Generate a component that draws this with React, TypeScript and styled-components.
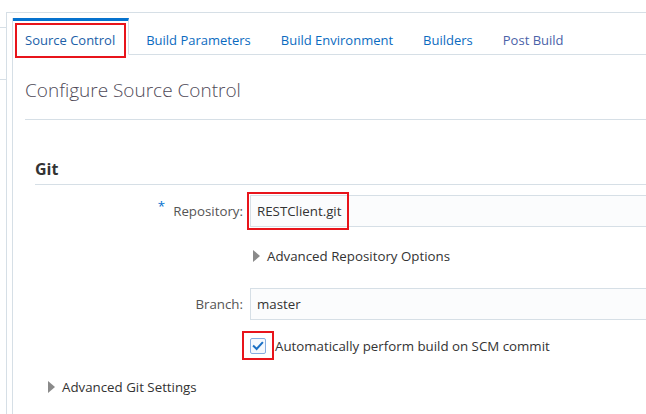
import React from "react";
import styled, { createGlobalStyle } from "styled-components";

const GlobalStyle = createGlobalStyle`
  html, body { margin: 0; padding: 0; background: #fff; }
  body {
    font-family: "Open Sans", "Noto Sans", "Liberation Sans", sans-serif;
    font-size: 13px;
    color: #333;
    overflow: hidden;
    width: 646px;
    height: 414px;
  }
`;

const BORDER = "#d6dfe6";

const Page = styled.div`
  display: flex;
  height: 414px;
  width: 646px;
  overflow: hidden;
`;

const LeftPane = styled.div`
  width: 6px;
  flex: none;
  padding-top: 27px;
  display: flex;
  flex-direction: column;
`;

const LeftRule = styled.div<{ $gap: number }>`
  height: 0;
  border-top: 1px solid ${BORDER};
  margin-bottom: ${(p) => p.$gap}px;
`;

const Frame = styled.div`
  flex: 1;
  margin-top: 12px;
  border-top: 1px solid ${BORDER};
  border-left: 1px solid ${BORDER};
  padding: 5px 0 0 5px;
  min-width: 0;
`;

const Panel = styled.div`
  border-left: 1px solid ${BORDER};
  height: 100%;
`;

const TabBar = styled.div`
  display: flex;
  height: 37px;
  position: relative;
`;

const Tab = styled.div<{ $active?: boolean; $lead?: number; $tint?: string }>`
  position: relative;
  display: flex;
  align-items: center;
  padding: ${(p) => (p.$active ? "5px 13px 0 12px" : `5px 15px 0 ${p.$lead ?? 15}px`)};
  color: ${(p) => p.$tint ?? (p.$active ? "#2060a8" : "#0b6bbf")};
  border-top: ${(p) => (p.$active ? "3px solid #0572ce" : "3px solid transparent")};
  border-right: ${(p) => (p.$active ? `1px solid ${BORDER}` : "none")};
  border-bottom: ${(p) => (p.$active ? "1px solid transparent" : `1px solid ${BORDER}`)};
  white-space: nowrap;
`;

const TabFill = styled.div`
  flex: 1;
  border-bottom: 1px solid ${BORDER};
`;

const Highlight = styled.span<{ $t: number; $l: number; $w: number; $h: number }>`
  position: absolute;
  top: ${(p) => p.$t}px;
  left: ${(p) => p.$l}px;
  width: ${(p) => p.$w}px;
  height: ${(p) => p.$h}px;
  border: 2px solid #e8141b;
  box-sizing: border-box;
  pointer-events: none;
`;

const Content = styled.div`
  padding: 0 0 0 12px;
  font-size: 13.3px;
`;

const Heading = styled.h1`
  margin: 0;
  padding: 22px 0 15px;
  font-size: 19px;
  font-weight: 300;
  line-height: 27px;
  color: #4f4a58;
  border-bottom: 1px solid ${BORDER};
  white-space: nowrap;
`;

const Section = styled.div`
  padding: 0 0 0 10px;
`;

const SectionTitle = styled.h2`
  margin: 0;
  padding: 39px 0 4px;
  font-size: 16px;
  font-weight: 700;
  line-height: 21px;
  color: #333;
  border-bottom: 1px solid ${BORDER};
`;

const Form = styled.div`
  display: grid;
  grid-template-columns: 208px 1fr;
  column-gap: 7px;
  padding-top: 10px;
`;

const Label = styled.label`
  display: flex;
  justify-content: flex-end;
  align-items: center;
  color: #555;
  white-space: nowrap;
`;

const Required = styled.span`
  color: #0572ce;
  margin-right: 8px;
  position: relative;
  top: -5px;
`;

const Field = styled.div`
  position: relative;
`;

const Input = styled.div`
  height: 30px;
  border: 1px solid ${BORDER};
  border-right: none;
  background: #fbfcfd;
  display: flex;
  align-items: center;
  padding-left: 6px;
  color: #333;
  white-space: nowrap;
`;

const Disclosure = styled.div<{ $mt: number }>`
  display: flex;
  align-items: center;
  gap: 7px;
  margin-top: ${(p) => p.$mt}px;
  color: #333;
  white-space: nowrap;
  height: 20px;
`;

const Triangle = styled.span`
  width: 0;
  height: 0;
  border-top: 6px solid transparent;
  border-bottom: 6px solid transparent;
  border-left: 7px solid #8a8a8a;
  margin-left: 3px;
`;

const RowGap = styled.div<{ $h: number }>`
  grid-column: 1 / -1;
  height: ${(p) => p.$h}px;
`;

const CheckRow = styled.div`
  grid-column: 2;
  display: flex;
  align-items: center;
  gap: 9px;
  height: 20px;
  white-space: nowrap;
  color: #333;
`;

const CheckWrap = styled.span`
  position: relative;
  display: inline-flex;
  width: 16px;
  height: 16px;
`;

const Check = () => (
  <svg width="16" height="16" viewBox="0 0 16 16">
    <rect x="0.5" y="0.5" width="15" height="15" rx="1.5" fill="#f4f8fd" stroke="#86ade0" />
    <path d="M3.8 8.2 L6.6 11 L12.2 4.8" fill="none" stroke="#1a6fc4" strokeWidth="2" strokeLinecap="square" />
  </svg>
);

const Outer = styled.div`
  padding-left: 20px;
  margin-top: 21px;
`;

export default function App() {
  return (
    <>
      <GlobalStyle />
      <Page>
        <LeftPane>
          <LeftRule $gap={51} />
          <LeftRule $gap={0} />
        </LeftPane>
        <Frame>
          <Panel>
            <TabBar>
              <Tab $active>
                Source Control
                <Highlight $t={2} $l={2} $w={111} $h={35} />
              </Tab>
              <Tab $lead={17}>Build Parameters</Tab>
              <Tab>Build Environment</Tab>
              <Tab>Builders</Tab>
              <Tab $tint="#4a62a8">Post Build</Tab>
              <TabFill />
            </TabBar>
            <Content>
              <Heading>Configure Source Control</Heading>
              <Section>
                <SectionTitle>Git</SectionTitle>
                <Form>
                  <Label>
                    <Required>*</Required>Repository:
                  </Label>
                  <Field>
                    <Input>RESTClient.git</Input>
                    <Highlight $t={-3} $l={-3} $w={102} $h={38} />
                  </Field>
                  <div />
                  <Disclosure $mt={19}>
                    <Triangle />
                    Advanced Repository Options
                  </Disclosure>
                  <RowGap $h={22} />
                  <Label>Branch:</Label>
                  <Field>
                    <Input>master</Input>
                  </Field>
                  <RowGap $h={16} />
                  <CheckRow>
                    <CheckWrap>
                      <Check />
                      <Highlight $t={-7} $l={-8} $w={32} $h={29} />
                    </CheckWrap>
                    Automatically perform build on SCM commit
                  </CheckRow>
                </Form>
              </Section>
              <Outer>
                <Disclosure $mt={0}>
                  <Triangle />
                  Advanced Git Settings
                </Disclosure>
              </Outer>
            </Content>
          </Panel>
        </Frame>
      </Page>
    </>
  );
}
